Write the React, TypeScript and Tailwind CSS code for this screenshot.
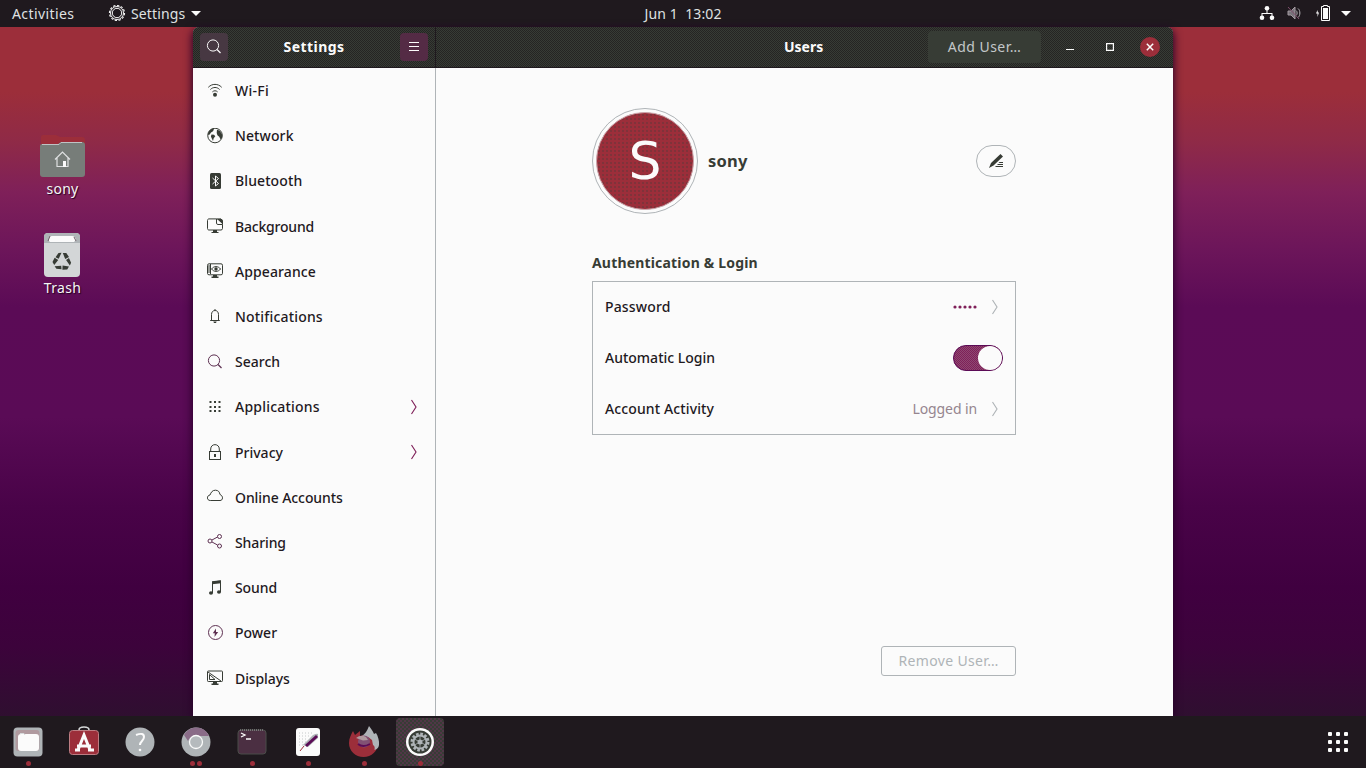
import React from "react";

type IconProps = { className?: string; children: React.ReactNode };

function Icon({ className = "size-4", children }: IconProps) {
  return (
    <svg viewBox="0 0 16 16" className={`${className} shrink-0`} fill="none" stroke="currentColor" strokeWidth="1">
      {children}
    </svg>
  );
}

const fill = { fill: "currentColor", stroke: "none" };

const icons: Record<string, React.ReactNode> = {
  wifi: (
    <>
      <path d="M1.3 4.3C5 .4 11 .4 14.7 4.3M3.4 6.500C6 3.800 10 3.800 12.600 6.500M5.400 8.900c1.500-1.500 3.700-1.500 5.200 0" />
      <circle cx="8" cy="11.800" r="2" {...fill} />
    </>
  ),
  network: (
    <>
      <circle cx="8" cy="7.500" r="7.300" />
      <path {...fill} d="M1 5.500 2 3 5 .8l2 .5-1 2-2 1.200L3 6 1.500 7.500zM4.500 6.500l2.500.3 1.300 1.500-1.600 2-.7 2.700-1.200-2.400-.9-2.200zM10 1.500l3 1.500 2.300 4-.3 3-1.500 1.300-1.300-2.600-1.800-1.400-.7-2.300z" />
    </>
  ),
  bluetooth: (
    <>
      <rect x="3" y="0" width="11" height="16" rx="1.500" {...fill} />
      <path d="m5.500 5 6 5.500L8.500 13V3l3 2.500-6 5.500" stroke="#fbfbfb" />
    </>
  ),
  background: (
    <>
      <path d="M9.500.9H2C1.100.9.500 1.500.5 2.400v8.200c0 .8.6 1.400 1.500 1.400h12c.9 0 1.500-.6 1.500-1.400V6.500M9.500.9v4.200c0 .8.5 1.400 1.400 1.400h4.600M9.500.9H14l1.500 1.500v4" />
      <path {...fill} d="M10 1h4.500l1 1v4zM6 12h4v2h1.500v1h-7v-1H6z" />
    </>
  ),
  appearance: (
    <>
      <rect x=".5" y=".8" width="15" height="11" rx="1.500" />
      <path d="M1 3h3M1 5h2.500M1 7h2.500M1 9h3M3.500 1v10M4.500 6C7 2.800 11 2.800 13.600 6 11 9.200 7 9.200 4.500 6z" />
      <circle cx="9" cy="6" r="1.700" {...fill} />
      <path {...fill} d="M6 12h4v1.500h1.500V15h-7v-1.500H6z" />
    </>
  ),
  notifications: (
    <>
      <path d="M4.500 11V5.500c0-2.400 1.400-4 3.500-4s3.500 1.600 3.500 4V11M3.200 11.500h9.600M7.500.5h1" />
      <path {...fill} d="M6.300 12.500h3.400L9 14H7z" />
    </>
  ),
  search: (
    <>
      <circle cx="7" cy="6.500" r="5.600" />
      <path d="m11 10.500 3.500 3.500" strokeWidth="1.300" />
    </>
  ),
  applications: (
    <g {...fill}>
      {[2, 7, 11].map((y) => [2.5, 7, 11.5].map((x) => <rect key={`${x}-${y}`} x={x} y={y} width="2" height="2" />))}
    </g>
  ),
  privacy: (
    <>
      <rect x="2.500" y="7.500" width="11" height="8" />
      <path d="M3.700 7.500V5c0-5.800 8.600-5.800 8.600 0v2.500" />
      <rect x="7" y="10" width="2" height="3" {...fill} />
    </>
  ),
  accounts: <path d="M3.300 11.500C-.5 11.500-.5 6.500 3 6 4 3.500 5.200 1.200 8.400 1.200c3 0 4.300 2 4.500 4.200 1.600.8 2.600 2 2.600 3.400 0 1.700-1 2.700-2.500 2.700z" />,
  sharing: (
    <>
      <circle cx="3" cy="7" r="2" />
      <circle cx="12.500" cy="2.500" r="2" />
      <circle cx="12.500" cy="12" r="2" />
      <path d="m5 6 5.500-3M5 8l5.500 3" />
    </>
  ),
  sound: (
    <>
      <path d="M5.500 13V2l8-1v11" />
      <path {...fill} d="M5 1.200 14 .3v3L5 4.200z" />
      <ellipse cx="4" cy="13" rx="2" ry="1.800" {...fill} />
      <ellipse cx="12" cy="12" rx="2" ry="1.800" {...fill} />
    </>
  ),
  power: (
    <>
      <circle cx="8.500" cy="7.500" r="7" />
      <path {...fill} d="M9 3.500 5.800 8.300h2L7.500 12l3.700-5H9z" />
    </>
  ),
  displays: (
    <>
      <rect x=".5" y="1" width="15" height="10.500" rx=".8" />
      <path d="m1 2 13 9M2.500 4.500v5h5.500z" />
      <path {...fill} d="M6 12h4v1.500h1.500V15h-7v-1.500H6z" />
    </>
  ),
};

const plain = "text-[#373c35]";
const plum = "text-[#5d3051]";

const menu: { icon: string; label: string; tone: string; track?: string; more?: boolean }[] = [
  { icon: "wifi", label: "Wi-Fi", tone: plain, track: "tracking-[0.3px]" },
  { icon: "network", label: "Network", tone: plain, track: "tracking-[0.1px]" },
  { icon: "bluetooth", label: "Bluetooth", tone: plain, track: "tracking-[0.1px]" },
  { icon: "background", label: "Background", tone: plain, track: "tracking-[-0.2px]" },
  { icon: "appearance", label: "Appearance", tone: plain, track: "tracking-[0.1px]" },
  { icon: "notifications", label: "Notifications", tone: plain, track: "tracking-[0.18px]" },
  { icon: "search", label: "Search", tone: plum },
  { icon: "applications", label: "Applications", tone: plain, track: "tracking-[0.22px]", more: true },
  { icon: "privacy", label: "Privacy", tone: plain, more: true },
  { icon: "accounts", label: "Online Accounts", tone: plain, track: "tracking-[-0.08px]" },
  { icon: "sharing", label: "Sharing", tone: plum, track: "tracking-[-0.1px]" },
  { icon: "sound", label: "Sound", tone: plain, track: "tracking-[-0.1px]" },
  { icon: "power", label: "Power", tone: plum },
  { icon: "displays", label: "Displays", tone: plain, track: "tracking-[-0.1px]" },
];

function Chevron({ className }: { className: string }) {
  return (
    <svg viewBox="0 0 8 16" className={`h-4 w-2 shrink-0 ${className}`} fill="none" stroke="currentColor" strokeWidth="1.150">
      <path d="M1.500 1 6 8l-4.500 7" />
    </svg>
  );
}

function TopBar() {
  return (
    <header className="grid h-[27px] shrink-0 grid-cols-3 items-center bg-[#1f191e] pb-px text-[14px] text-[#dfe1e2]">
      <div className="flex items-center pl-3">
        <span className="w-24 tracking-[0.400px]">Activities</span>
        <svg viewBox="0 0 18 18" className="size-[18px]" fill="none" stroke="#f4f4f4">
          <circle cx="9" cy="9" r="7.500" strokeWidth="1.200" strokeDasharray="2.300 1.600" />
          <circle cx="9" cy="9" r="6.500" />
          <circle cx="9" cy="9" r="4.700" />
        </svg>
        <span className="ml-[5px] w-[59px] tracking-[0.120px]">Settings</span>
        <svg viewBox="0 0 10 5" className="ml-px h-[5px] w-2.5" fill="#fbfbfb"><path d="M0 0h10L5 5z" /></svg>
      </div>
      <div className="text-center tracking-[0.100px] whitespace-pre">Jun 1  13:02</div>
      <div className="flex items-center justify-end pr-[15px]">
        <svg viewBox="0 0 16 16" className="-mr-px size-4" fill="#fbfbfb">
          <circle cx="8" cy="3.200" r="2.300" /><circle cx="3" cy="12.800" r="2.300" /><circle cx="13" cy="12.800" r="2.300" />
          <path d="M7.500 4h1v4h5v4h-1V9h-9v3h-1V8h5z" />
        </svg>
        <svg viewBox="0 0 16 16" className="ml-3 size-4" fill="none" stroke="#b8b5b9">
          <path d="M2 6h3l4-4v12L5 10H2z" fill="#78737a" stroke="#a39aa0" />
          <path d="M10 5.500c1.500 1 1.500 4 0 5M12 3.500c2.500 2 2.500 7 0 9" /><path d="M2 2l11 12" stroke="#7f4f6c" />
        </svg>
        <svg viewBox="0 0 16 16" className="ml-[13px] size-4" fill="#fbfbfb">
          <path d="M6.500 1.500h2V.5h4v1h2v14h-8z" fill="none" stroke="#fbfbfb" /><path d="M8 3h5v11H8zM2.500 5 1 8.500h1.500V12L4 7.500H2.800z" />
        </svg>
        <svg viewBox="0 0 10 5" className="ml-2.5 h-[5px] w-2.5" fill="#fbfbfb"><path d="M0 0h10L5 5z" /></svg>
      </div>
    </header>
  );
}

function Desktop() {
  return (
    <div className="flex w-[193px] shrink-0 flex-col pt-[113px] pl-6 text-[14px] leading-4 text-[#f6f6f6] [text-shadow:1px_1px_1px_#200020]">
      <div className="flex w-[77px] flex-col items-center">
        <svg viewBox="0 0 46 38" className="h-[38px] w-[46px] overflow-visible">
          <path d="M1 5V-3q0-2 2-2h13l4 2h22q3 0 3 3v6H1z" fill="#9c2e3a" />
          <path d="M0 6q0-2 2-2h16l3-2h21q3 0 3 3v29q0 3-3 3H3q-3 0-3-3z" fill="#777d79" />
          <path d="M2 4.500h17L21 2.500h21" fill="none" stroke="#bfc3c5" />
          <path d="M15 19.500 22.500 12l7.500 7.500M17 18v8.500h11V18" fill="none" stroke="#dfe1e2" strokeWidth="1.200" />
          <path d="M23 21h3v6h-3z" fill="#fbfbfb" />
        </svg>
        <span className="mt-[3px] tracking-[0.200px]">sony</span>
      </div>
      <div className="mt-9 flex w-[77px] flex-col items-center">
        <svg viewBox="0 0 36 44" className="-ml-px h-11 w-9">
          <rect width="36" height="44" rx="4" fill="#d3d6d7" />
          <path d="M0 10V4q0-4 4-4h28q4 0 4 4v6z" fill="#afb4b7" />
          <path d="M5 8V5q0-2 3-2h20q3 0 4 4l-2 2H6z" fill="#fbfbfb" />
          <path d="M4 8l2-5M32 8l-2-4" fill="none" stroke="#70606a" />
          <g fill="#373c35">
            {[0, 120, 240].map((a) => (
              <g key={a} transform={`rotate(${a} 18 28.500)`}>
                <path d="m14.500 20 3-.3-2.800 6-3.200-1.500zM18.800 20h3.500l2.700 4-3.800 2z" />
              </g>
            ))}
          </g>
        </svg>
        <span className="mt-[3px] tracking-[0.300px]">Trash</span>
      </div>
    </div>
  );
}

const grain =
  "bg-[#2b2c29] bg-[conic-gradient(#373c35_25%,#252423_0_50%,#373c35_0_75%,#252423_0)] bg-[length:2px_2px]";

function HeaderBar() {
  return (
    <div className={`flex h-[41px] shrink-0 rounded-t-md border-b border-[#1f191e] font-bold text-[#fbfbfb] ${grain}`}>
      <div className="flex w-[243px] items-center justify-between border-r border-[#1f191e] px-[7px]">
        <div className="flex size-7 items-center justify-center rounded bg-[#473842]">
          <Icon className="size-4">{icons.search}</Icon>
        </div>
        <span className="-mt-0.5 text-[14px] tracking-[0.450px]">Settings</span>
        <div className="flex size-7 items-center justify-center rounded bg-[#542b45]">
          <svg viewBox="0 0 12 10" className="h-2.5 w-3" stroke="#fbfbfb"><path d="M1 .5h10M1 4.500h10M1 8.500h10" /></svg>
        </div>
      </div>
      <div className="flex flex-1 items-center pr-[13px]">
        <span className="-mt-0.5 ml-[348px] w-[144px] text-[14px]">Users</span>
        <div className="flex h-8 w-[113px] items-center justify-center rounded bg-[#373c35] pb-0.5 text-[14px] font-normal tracking-[0.450px] text-[#c3c7c9]">Add User…</div>
        <svg viewBox="0 0 8 10" className="ml-[25px] h-2.5 w-2" stroke="#fbfbfb"><path d="M0 7.500h8" /></svg>
        <svg viewBox="0 0 8 8" className="ml-8 size-2" fill="none" stroke="#fbfbfb" strokeWidth="1.200"><path d="M.6.6h6.800v6.800H.6z" /></svg>
        <div className="ml-auto flex size-5 items-center justify-center rounded-full bg-[#9c2e3a]">
          <svg viewBox="0 0 8 8" className="size-2" stroke="#fbfbfb" strokeWidth="1.500"><path d="m.8.8 6.400 6.400M7.200.8.8 7.200" /></svg>
        </div>
      </div>
    </div>
  );
}

function Sidebar() {
  return (
    <nav className="w-[243px] shrink-0 border-r border-[#afb4b7] text-[14px] font-medium">
      {menu.map((m) => (
        <div key={m.label} className="flex h-[45.200px] items-center pr-[17px] pl-3.5">
          <Icon className={`size-4 ${m.tone}`}>{icons[m.icon]}</Icon>
          <span className={`ml-3 flex-1 ${m.track ?? ""}`}>{m.label}</span>
          {m.more && <Chevron className="text-[#7f2059]" />}
        </div>
      ))}
    </nav>
  );
}

function UserPanel() {
  return (
    <main className="flex flex-1 flex-col pt-10 pr-[157px] pb-10 pl-[156px] text-[14px] font-medium">
      <div className="flex h-[106px] items-center">
        <div className="flex size-[106px] items-center justify-center rounded-full border border-[#afb4b7]">
          <div className="flex size-[98px] items-center justify-center rounded-full border border-[#c9a5aa] bg-[#9c2e3a] bg-[radial-gradient(#5d373a_0.600px,transparent_0.800px)] bg-[length:4px_4px] text-[#fbfbfb]">
            <span className="font-['DejaVu_Sans',sans-serif] text-[52px] leading-none font-normal">S</span>
          </div>
        </div>
        <span className="ml-2.5 flex-1 text-[16.500px] font-bold tracking-[0.200px] text-[#373c35]">sony</span>
        <div className="flex h-8 w-10 items-center justify-center rounded-full border border-[#afb4b7] text-[#373c35]">
          <svg viewBox="0 0 16 16" className="size-4" fill="currentColor">
            <path d="M12.500 1 15 3.500 5.500 12.500 1 15l2-5zM11.500 9H15v1h-4.500zM10 11h5v1H9zM8 13h7v1H7z" />
          </svg>
        </div>
      </div>
      <h2 className="mt-[39px] h-5 text-[14px] leading-5 font-bold tracking-[0.180px] text-[#373c35]">Authentication &amp; Login</h2>
      <section className="mt-2 h-[154px] border border-[#afb4b7] px-3">
        <div className="flex h-[51px] items-center pb-0.5">
          <span className="flex-1 tracking-[0.150px]">Password</span>
          <svg viewBox="0 0 24 4" className="h-1 w-6" fill="#7f2059">
            {[2, 7, 12, 17, 22].map((x) => <circle key={x} cx={x} cy="2" r="1.600" />)}
          </svg>
          <Chevron className="mr-1 ml-3.5 text-[#afb4b7]" />
        </div>
        <div className="flex h-[51px] items-center pb-0.5">
          <span className="flex-1">Automatic Login</span>
          <div className="flex h-[26px] w-[50px] justify-end rounded-full border border-[#5b0b56] bg-[#7f2059] bg-[conic-gradient(#8e4972_25%,#7f2059_0_50%,#8e4972_0_75%,#7f2059_0)] bg-[length:2px_2px]">
            <div className="size-6 rounded-full bg-[#fbfbfb]" />
          </div>
        </div>
        <div className="flex h-[51px] items-center pb-0.5">
          <span className="flex-1 tracking-[0.120px]">Account Activity</span>
          <span className="font-normal tracking-[-0.100px] text-[#95858f]">Logged in</span>
          <Chevron className="mr-1 ml-3.5 text-[#afb4b7]" />
        </div>
      </section>
      <div className="mt-auto flex h-[30px] w-[135px] items-center justify-center self-end rounded-[3px] border border-[#afb4b7] pb-0.5 font-normal tracking-[0.350px] text-[#afb4b7]">
        Remove User…
      </div>
    </main>
  );
}

const dock: { name: string; dots: number; art: React.ReactNode }[] = [
  { name: "files", dots: 1, art: (
    <><rect x="1.500" y="1.500" width="29" height="29" rx="4" fill="#afb4b7" /><rect x="3.500" y="4" width="24" height="21" rx="3" fill="#b09a9f" /><path d="M6 11q0-3 3-3h15q3 0 3 3v11q0 3-3 3H9q-3 0-3-3z" fill="#fbfbfb" /><path d="M8 7.500h4l1 1.500" fill="none" stroke="#d6d9da" /></>
  ) },
  { name: "software", dots: 0, art: (
    <><path d="M11 7V4q0-3 5-3t5 3v3" fill="none" stroke="#d5d7d8" strokeWidth="1.500" /><rect x="1.500" y="4.500" width="29" height="24" rx="3" fill="#9c2e3a" stroke="#bd7d83" /><path d="m10 24 6-15 6 15M9 20h14M7 24h5M20 24h6" fill="none" stroke="#fbfbfb" strokeWidth="3" /></>
  ) },
  { name: "help", dots: 0, art: (
    <><circle cx="16" cy="16" r="14.500" fill="#afb4b7" /><path d="M12 9q8-3 8 2c0 4-4 4-4 8" fill="none" stroke="#fbfbfb" strokeWidth="2" /><circle cx="16" cy="24" r="1.300" fill="#fbfbfb" /></>
  ) },
  { name: "chromium", dots: 2, art: (
    <><circle cx="16" cy="16" r="14.500" fill="#afb4b7" /><path d="M4 9C10-1 24-1 29 10H16q-6 0-8 5z" fill="#8a6c88" /><circle cx="16" cy="16" r="6.500" fill="#b5babd" stroke="#fbfbfb" strokeWidth="1.300" /></>
  ) },
  { name: "terminal", dots: 1, art: (
    <><rect x="2" y="4" width="28" height="24" rx="3" fill="#4b2f42" stroke="#4b4c49" /><path d="M4 4h24" stroke="#a5a8a9" strokeDasharray="1 1" /><path d="m5 7 4 2-4 2M10 13h5" fill="none" stroke="#fbfbfb" strokeWidth="1.300" /></>
  ) },
  { name: "editor", dots: 1, art: (
    <><rect x="4" y="2" width="24" height="28" rx="3" fill="#fbfbfb" /><path d="M7 7h14M7 10h11M7 13h9M7 16h7M7 19h5" stroke="#c6c9ca" strokeDasharray="1 2" /><path d="M11 19 21 9q4-2 5-1v4L16 21z" fill="#afb4b7" /><path d="m14 20 11-10" stroke="#5b0b56" strokeWidth="3" /><path d="m12 20-4 5" stroke="#9c2e3a" /></>
  ) },
  { name: "firefox", dots: 1, art: (
    <>
      <path d="M1 17C1 12 3 9 5 5l2 4 5-4v5l8-2 10 9c0 8-6.500 14-14.500 14S1 25 1 17z" fill="#9c2e3a" />
      <path d="M14 10c3-2 5-5 7-10 2 3 4 5 5 8l2-1c2 3 3.500 8 3 12-.4 3-2 4-4.500 5 .5-3 0-4-1.500-5l-1-5-4-3z" fill="#afb4b7" />
      <circle cx="16" cy="15.500" r="6" fill="#815174" />
      <path d="M8 12q5-4 10-1l2 3-5 .5z" fill="#b09a9f" />
      <path d="M10 18q5 4 12 0" fill="none" stroke="#5b0b56" strokeWidth="2" />
    </>
  ) },
  { name: "settings", dots: 1, art: (
    <><circle cx="16" cy="16" r="14" fill="#fbfbfb" /><circle cx="16" cy="16" r="11.500" fill="#373c35" /><circle cx="16" cy="16" r="8" fill="none" stroke="#afb4b7" strokeWidth="3" strokeDasharray="2.600 1.590" /><circle cx="16" cy="16" r="6.500" fill="none" stroke="#afb4b7" strokeWidth="2" /><circle cx="16" cy="16" r="2.500" fill="#afb4b7" /><path d="M16 9v14M9.500 12.500l13 7M9.500 19.500l13-7" stroke="#afb4b7" strokeWidth=".8" /></>
  ) },
];

function Dock() {
  return (
    <footer className="z-10 flex h-[52px] shrink-0 items-center justify-between bg-[#1f191e] pr-[18px] pl-1">
      <div className="flex gap-2">
        {dock.map((d) => (
          <div
            key={d.name}
            className={`flex size-12 flex-col items-center rounded pt-2 ${
              d.name === "settings"
                ? "bg-[#373c35] bg-[conic-gradient(#513647_25%,#373c35_0_50%,#513647_0_75%,#373c35_0)] bg-[length:4px_4px]"
                : ""
            }`}
          >
            <svg viewBox="0 0 32 32" className="size-8 shrink-0">{d.art}</svg>
            <div className="mt-[3px] flex gap-0.5">
              {Array.from({ length: d.dots }, (_, i) => (
                <span key={i} className="size-[5px] rounded-full bg-[#9c2e3a]" />
              ))}
            </div>
          </div>
        ))}
      </div>
      <div className="grid grid-cols-3 gap-1">
        {Array.from({ length: 9 }, (_, i) => (
          <span key={i} className="size-1 rounded-[1px] bg-[#fbfbfb]" />
        ))}
      </div>
    </footer>
  );
}

export default function App() {
  return (
    <div className="flex h-screen w-screen flex-col overflow-hidden bg-[#1f191e] font-['Noto_Sans','Open_Sans',sans-serif] text-[#1f191e]">
      <TopBar />
      <div className="flex min-h-0 flex-1 bg-[linear-gradient(#9c2e3a_0,#9c2e3a_65px,#8f2a47_115px,#7f2059_165px,#6d165a_220px,#5b0b56_280px,#5a0b56_390px,#490348_480px,#400040_560px,#3c033b_620px,#2f0f30_689px)]">
        <Desktop />
        <div className="flex w-[980px] shrink-0 flex-col rounded-t-md bg-[#fbfbfb] shadow-[0_3px_9px_1px_#28002a]">
          <HeaderBar />
          <div className="flex min-h-0 flex-1">
            <Sidebar />
            <UserPanel />
          </div>
        </div>
      </div>
      <Dock />
    </div>
  );
}
